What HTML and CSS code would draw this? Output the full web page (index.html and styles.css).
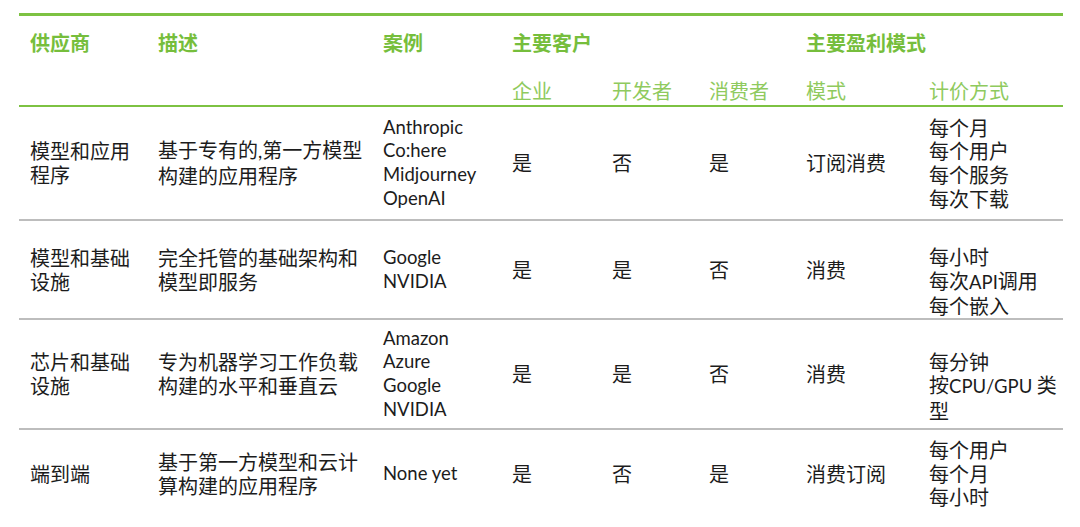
FILE: index.html
```html
<!DOCTYPE html>
<html lang="zh">
<head>
<meta charset="utf-8">
<title>生成式AI供应商</title>
<link rel="stylesheet" href="styles.css">
</head>
<body>
<div class="page">
  <table class="vendors">
    <colgroup>
      <col class="c-vendor"><col class="c-desc"><col class="c-case"><col class="c-ent"><col class="c-dev"><col class="c-con"><col class="c-mode"><col class="c-price">
    </colgroup>
    <thead>
      <tr class="h1">
        <th>供应商</th>
        <th>描述</th>
        <th>案例</th>
        <th colspan="3">主要客户</th>
        <th colspan="2">主要盈利模式</th>
      </tr>
      <tr class="h2">
        <th></th><th></th><th></th>
        <th>企业</th><th>开发者</th><th>消费者</th>
        <th>模式</th><th>计价方式</th>
      </tr>
    </thead>
    <tbody>
      <tr class="r1">
        <td>模型和应用<br>程序</td>
        <td>基于专有的<span class="en">,</span>第一方模型<br>构建的应用程序</td>
        <td class="en">Anthropic<br>Co:here<br>Midjourney<br>OpenAI</td>
        <td>是</td><td>否</td><td>是</td>
        <td>订阅消费</td>
        <td>每个月<br>每个用户<br>每个服务<br>每次下载</td>
      </tr>
      <tr class="r2">
        <td>模型和基础<br>设施</td>
        <td>完全托管的基础架构和<br>模型即服务</td>
        <td class="en">Google<br>NVIDIA</td>
        <td>是</td><td>是</td><td>否</td>
        <td>消费</td>
        <td class="shift">每小时<br>每次<span class="en">API</span>调用<br>每个嵌入</td>
      </tr>
      <tr class="r3">
        <td>芯片和基础<br>设施</td>
        <td>专为机器学习工作负载<br>构建的水平和垂直云</td>
        <td class="en">Amazon<br>Azure<br>Google<br>NVIDIA</td>
        <td>是</td><td>是</td><td>否</td>
        <td>消费</td>
        <td class="shift">每分钟<br>按<span class="en">CPU/GPU</span> 类<br>型</td>
      </tr>
      <tr class="r4">
        <td>端到端</td>
        <td>基于第一方模型和云计<br>算构建的应用程序</td>
        <td class="en">None yet</td>
        <td>是</td><td>否</td><td>是</td>
        <td>消费订阅</td>
        <td>每个用户<br>每个月<br>每小时</td>
      </tr>
    </tbody>
  </table>
</div>
</body>
</html>
```

FILE: styles.css
```css
html, body {
  margin: 0;
  padding: 0;
  background: #ffffff;
}

.page {
  padding: 13px 17px 0 19px;
}

.vendors {
  width: 1044px;
  border-collapse: collapse;
  table-layout: fixed;
  font-family: "Noto Sans CJK SC", "Noto Sans", sans-serif;
  font-size: 20px;
  line-height: 23.7px;
  color: #1c1c1c;
  border-top: 3px solid #7dc242;
}

.c-vendor { width: 128px; }
.c-desc { width: 225px; }
.c-case { width: 129px; }
.c-ent { width: 100px; }
.c-dev { width: 97px; }
.c-con { width: 97px; }
.c-mode { width: 123px; }
.c-price { width: 145px; }

.vendors th,
.vendors td {
  padding: 0 4px 0 11px;
  text-align: left;
  white-space: nowrap;
  vertical-align: middle;
}

.h1 th {
  height: 54px;
  font-weight: 700;
  color: #76be3c;
}

.h2 th {
  height: 33px;
  font-weight: 400;
  color: #8fca5e;
  vertical-align: bottom;
  padding-bottom: 2px;
  border-bottom: 2px solid #7dc242;
}

.vendors tbody tr {
  border-bottom: 2px solid #bdbdbd;
}

.vendors tbody tr.r4 {
  border-bottom: none;
}

.r1 { height: 114px; }
.r2 { height: 96px; }
.r3 { height: 110px; }
.r4 { height: 88px; }

.en {
  font-family: "Lato", "Noto Sans", sans-serif;
  font-size: 18.5px;
}

.vendors td.shift {
  padding-top: 24px;
}
```
